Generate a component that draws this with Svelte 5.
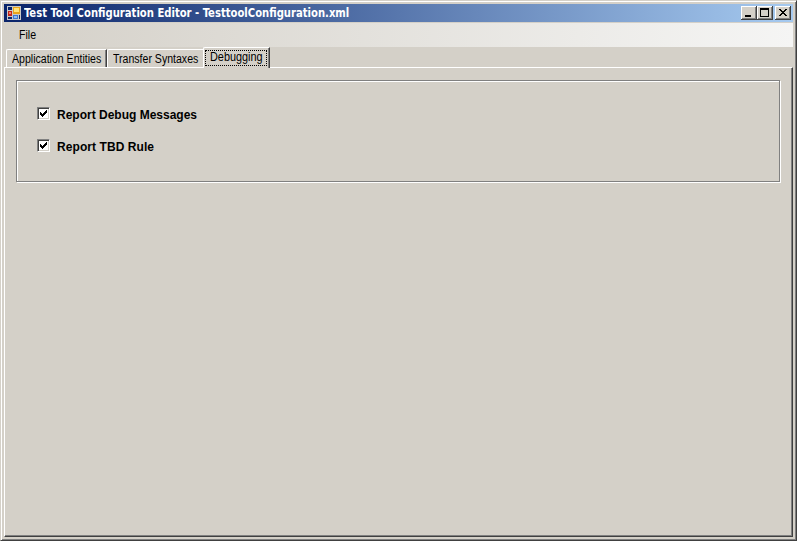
<script>
  const options = $state([
    { label: 'Report Debug Messages', checked: true, spacing: 0 },
    { label: 'Report TBD Rule', checked: true, spacing: 0.07 }
  ]);
</script>

<div class="window">
  <header class="titlebar">
    <svg class="appicon" width="15" height="15" viewBox="0 0 15 15" shape-rendering="crispEdges">
      <path fill="#c8c8c8" d="M0 0h5v1H1v3H0zM0 4h6v7H0zM0 11h1v2h4v1H0zM5 0h9v9H5zM5 8h9v1h-2v5H5zM12 13h2v1h-2zM13 9h1v5h-1z" />
      <path fill="#c42618" d="M1 5h4v5H1z" /><path fill="#f08070" d="M2 6h2v2H2z" />
      <path fill="#e9a51c" d="M6 1h7v7H6z" /><path fill="#ffe37a" d="M7 2h5v4H7z" />
      <path fill="#3e78d0" d="M6 9h5v4H6z" /><path fill="#8dbdf5" d="M7 10h3v2H7z" />
    </svg>
    <span class="title">Test Tool Configuration Editor - TesttoolConfiguration.xml</span>
    <div class="controls">
      <button aria-label="Minimize"><svg width="16" height="14" shape-rendering="crispEdges"><path d="M4 9h6v2H4z" /></svg></button>
      <button aria-label="Maximize"><svg width="16" height="14" shape-rendering="crispEdges"><path fill-rule="evenodd" d="M3 2h9v9H3zM4 4v6h7V4z" /></svg></button>
      <button class="close" aria-label="Close"><svg width="16" height="14" shape-rendering="crispEdges"><path d="M4 3h2v1h1v1h2V4h1V3h2v1h-1v1h-1v1H9v1h1v1h1v1h1v1h-2V9H9V8H7v1H6v1H4V9h1V8h1V7h1V6H6V5H5V4H4z" /></svg></button>
    </div>
  </header>
  <nav class="menubar"><span class="narrow">File</span></nav>
  <div class="tabs">
    <div class="tab first"><span class="narrow">Application Entities</span></div>
    <div class="tab second"><span class="narrow">Transfer Syntaxes</span></div>
    <div class="tab selected"><div class="focus"><span class="narrow">Debugging</span></div></div>
  </div>
  <main class="page">
    <section class="group">
      {#each options as option}
        <label>
          <input type="checkbox" bind:checked={option.checked} />
          <span class="box">
            {#if option.checked}
              <svg width="9" height="9" shape-rendering="crispEdges"><path d="M1 3h1v1h1v1h1V4h1V3h1V2h1V1h1v3H7v1H6v1H5v1H4v1H3V7H2V6H1z" /></svg>
            {/if}
          </span>
          <span class="caption" style:letter-spacing="{option.spacing}px">{option.label}</span>
        </label>
      {/each}
    </section>
  </main>
</div>

<style>
  :global(body) { margin: 0; overflow: hidden; }
  .window {
    box-sizing: border-box; width: 797px; height: 541px; padding: 2px;
    display: flex; flex-direction: column; background: #d4d0c8; color: #000;
    border: 1px solid; border-color: #d4d0c8 #404040 #404040 #d4d0c8;
    box-shadow: inset 1px 1px #fff, inset -1px -1px #808080;
    font: 12px/14px "Liberation Sans", Arial, sans-serif; white-space: nowrap;
  }
  .titlebar {
    box-sizing: border-box; height: 18px; margin: 1px 1px 0; padding: 0 2px 0 3px;
    display: flex; align-items: center; background: linear-gradient(90deg, #0a246a, #a6caf0);
  }
  .appicon { flex: none; }
  .title {
    margin-left: 2px; color: #fff;
    font: bold 12px/18px "DejaVu Sans Condensed", "DejaVu Sans", Tahoma, sans-serif;
    font-stretch: condensed; transform: scaleX(0.931); transform-origin: left;
  }
  .controls { display: flex; margin-left: auto; }
  button {
    width: 16px; height: 14px; padding: 0; border: 0; background: #d4d0c8;
    box-shadow: inset -1px -1px #404040, inset 1px 1px #fff, inset -2px -2px #808080;
  }
  button svg { display: block; }
  .close { margin-left: 2px; }
  .menubar {
    height: 24px; margin: 1px 1px 0; padding-left: 15px; line-height: 24px;
    background: linear-gradient(90deg, #d4d0c8, #f5f5f4);
  }
  .narrow { display: inline-block; transform: scaleX(0.88); transform-origin: left; }
  .tabs { display: flex; align-items: flex-end; height: 20px; padding-left: 3px; }
  .tab {
    box-sizing: border-box; height: 18px; border-top: 1px solid #fff; border-left: 1px solid #fff;
    border-top-left-radius: 2px; line-height: 18px;
  }
  .first { width: 101px; padding-left: 5px; border-right: 1px solid #404040; box-shadow: inset -1px 0 #808080; }
  .second { width: 96px; padding-left: 5px; }
  .selected {
    position: relative; width: 67px; height: 21px; margin-bottom: -1px; padding: 2px 0 0 1px;
    background: #d4d0c8; border-right: 1px solid #404040; box-shadow: inset -1px 0 #808080;
  }
  .focus {
    box-sizing: border-box; width: 62px; height: 16px; padding-left: 4px;
    border: 1px dotted #000; line-height: 13px;
  }
  .focus .narrow { transform: scaleX(0.905); }
  .page {
    flex: 1; margin: 0 1px 1px; padding: 12px 10px 0 11px;
    border: 1px solid; border-color: #fff #404040 #404040 #fff; box-shadow: inset -1px -1px #808080;
  }
  .group {
    box-sizing: border-box; width: 764px; height: 102px; padding: 25px 0 0 20px;
    border: 1px solid #808080; box-shadow: inset 1px 1px #fff, 1px 1px #fff;
  }
  label { display: flex; height: 32px; }
  input { position: absolute; opacity: 0; margin: 0; }
  .box {
    box-sizing: border-box; width: 13px; height: 13px; padding: 1px; margin-top: 1px; background: #fff;
    border: 1px solid; border-color: #808080 #fff #fff #808080;
    box-shadow: inset 1px 1px #404040, inset -1px -1px #d4d0c8;
  }
  .box svg { display: block; }
  .caption { margin: 2px 0 0 7px; font-weight: bold; }
</style>
